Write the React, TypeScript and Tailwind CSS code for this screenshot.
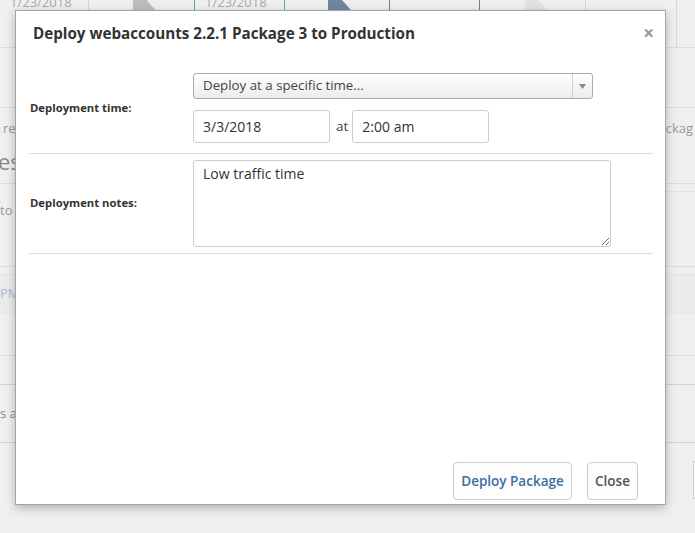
function BgTopStrip() {
  return (
    <div className="flex h-[48px] border-b border-[#dcdcdc] text-[13px] text-[#a9a9a9]">
      <div className="w-[89px] shrink-0 border-r border-[#d6d6d6] bg-[#efefef] pl-[10px] leading-[20px] -mt-[8px]">
        1/23/2018
      </div>
      <div className="flex w-[105px] shrink-0 bg-[#efefef]">
        <div className="ml-[44px] h-full w-[34px] bg-[#bdbdbd] [clip-path:polygon(0_0,40%_0,100%_50%,40%_100%,0_100%)]" />
      </div>
      <div className="w-[91px] shrink-0 border-x border-[#5fa89a] bg-[#efefef] pl-[10px] leading-[20px] -mt-[8px]">
        1/23/2018
      </div>
      <div className="flex w-[104px] shrink-0 bg-[#efefef]">
        <div className="ml-[43px] h-full w-[35px] bg-[#6f86a3] [clip-path:polygon(0_0,40%_0,100%_50%,40%_100%,0_100%)]" />
      </div>
      <div className="w-[91px] shrink-0 border-x border-[#6f86a3] bg-[#efefef]" />
      <div className="flex w-[105px] shrink-0 bg-[#efefef]">
        <div className="ml-[45px] h-full w-[33px] bg-[#e2e2e2] [clip-path:polygon(0_0,40%_0,100%_50%,40%_100%,0_100%)]" />
      </div>
      <div className="w-[92px] shrink-0 border-x border-[#d6d6d6] bg-[#efefef]" />
      <div className="flex-1 bg-[#efefef]" />
    </div>
  );
}

function Background() {
  return (
    <div className="flex h-full flex-col bg-[#efefef] text-[13px] text-[#9a9a9a]">
      <BgTopStrip />
      <div className="h-[59px]" />
      <div className="flex h-[76px] flex-col border-t border-[#dcdcdc]">
        <div className="flex justify-between pt-[10px] leading-[20px]">
          <span className="pl-[3px]">re</span>
          <span className="pr-[2px]">ckag</span>
        </div>
        <div className="-ml-[2px] mt-[8px] text-[22px] leading-[30px] text-[#8a8a8a]">es</div>
      </div>
      <div className="flex h-[83px] flex-col border-t border-[#dcdcdc]">
        <div className="ml-[666px] h-[8px] border-b border-[#e4e4e4]" />
        <div className="pt-[8px] leading-[20px]">to</div>
      </div>
      <div className="flex h-[89px] flex-col border-t border-[#dcdcdc] pt-[7px]">
        <div className="flex h-[40px] items-center border-y border-[#e6e6e6] bg-[#ebebeb] text-[#a8bcd0]">PM</div>
      </div>
      <div className="flex h-[88px] flex-col border-t border-[#dcdcdc] pt-[28px]">
        <div className="flex h-[60px] items-center border-y border-[#c6d4e2] text-[#8a8a8a]">s a</div>
      </div>
      <div className="flex flex-1 justify-end pt-[18px]">
        <div className="h-[38px] w-[2px] rounded-l border border-r-0 border-[#cfcfcf] bg-[#f7f7f7]" />
      </div>
    </div>
  );
}

function Modal() {
  return (
    <div className="absolute left-[15px] top-[10px] flex h-[495px] w-[651px] flex-col border border-[#a4a4a4] bg-white font-['Open_Sans',sans-serif] shadow-[0_3px_9px_rgba(0,0,0,0.25)]">
      <div className="flex h-[55px] items-start justify-between pl-[17px] pr-[11px] pt-[11px]">
        <h4 className="text-[15.2px] font-bold leading-[22px] text-[#333]">
          Deploy webaccounts 2.2.1 Package 3 to Production
        </h4>
        <button className="text-[19px] font-bold leading-[22px] text-[#999]">×</button>
      </div>

      <div className="flex flex-1 flex-col pl-[13px] pr-[12px]">
        {/* deployment time row */}
        <div className="flex items-center border-b border-[#dddddd] pb-[10px] pt-[7px]">
          <div className="w-[164px] shrink-0 pl-[1px] text-[11.3px] font-bold text-[#333]">Deployment time:</div>
          <div className="flex flex-col gap-[11px]">
            <div className="flex h-[26px] w-[400px] items-center rounded-[3px] border border-[#aaaaaa] bg-gradient-to-b from-white to-[#ececec] text-[13.3px] text-[#444]">
              <span className="flex-1 pl-[9px]">Deploy at a specific time...</span>
              <span className="flex h-full w-[20px] items-center justify-center border-l border-[#cfcfcf]">
                <svg width="7" height="5" viewBox="0 0 7 5">
                  <path d="M0 0h7L3.5 5z" fill="#888" />
                </svg>
              </span>
            </div>
            <div className="flex items-center text-[14px] text-[#333]">
              <div className="flex h-[33px] w-[137px] items-center rounded-[3px] border border-[#cccccc] pl-[9px]">3/3/2018</div>
              <span className="ml-[6px] mr-[4px] text-[13.5px] text-[#444]">at</span>
              <div className="flex h-[33px] w-[137px] items-center rounded-[3px] border border-[#cccccc] pl-[9px]">2:00 am</div>
            </div>
          </div>
        </div>

        {/* notes row */}
        <div className="flex items-center border-b border-[#dddddd] py-[6px]">
          <div className="w-[164px] shrink-0 pl-[1px] text-[11.3px] font-bold text-[#333]">Deployment notes:</div>
          <textarea
            defaultValue="Low traffic time"
            className="h-[87px] w-[418px] rounded-[3px] border border-[#cccccc] px-[9px] py-[4px] text-[14px] leading-[18px] text-[#333] outline-none"
          />
        </div>

        <div className="flex-1" />

        <div className="flex justify-end gap-[15px] pb-[4px] pr-[15px]">
          <button className="h-[38px] w-[119px] rounded-[4px] border border-[#cccccc] bg-[#fdfdfd] text-[13.5px] font-semibold text-[#3c6ea3]">
            Deploy Package
          </button>
          <button className="h-[38px] w-[51px] rounded-[4px] border border-[#cccccc] bg-[#fdfdfd] text-[13.5px] font-semibold text-[#555]">
            Close
          </button>
        </div>
      </div>
    </div>
  );
}

export default function App() {
  return (
    <div className="relative h-[533px] w-[695px] overflow-hidden font-['Open_Sans',sans-serif]">
      <Background />
      <Modal />
    </div>
  );
}
